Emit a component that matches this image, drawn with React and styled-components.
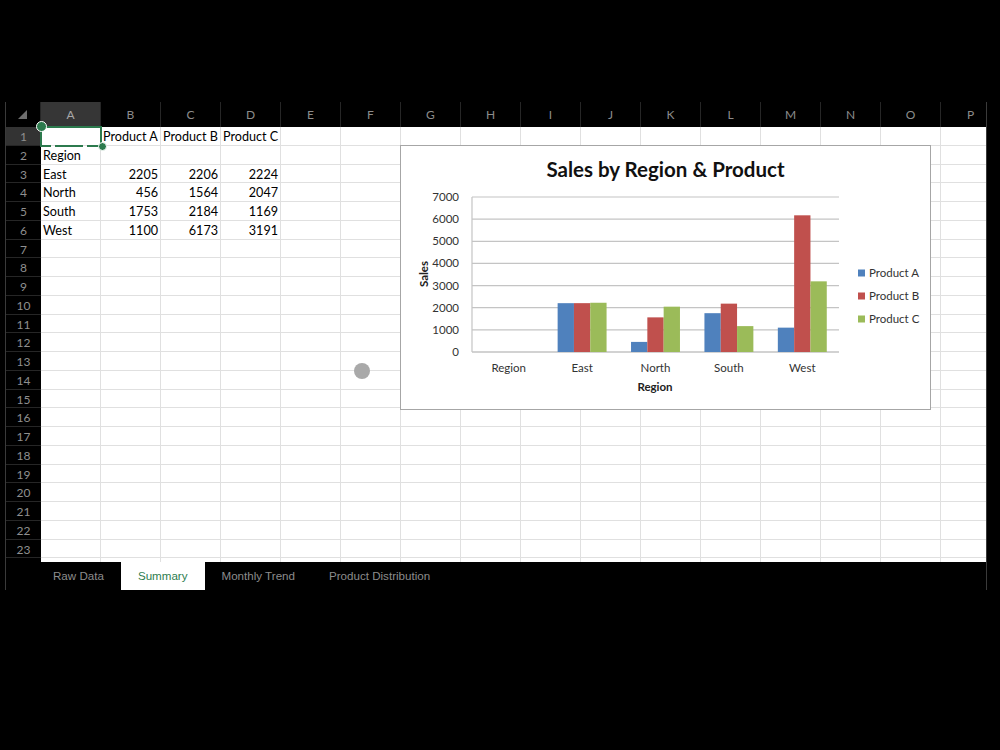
import React from "react";
import styled, { createGlobalStyle } from "styled-components";

const GlobalStyle = createGlobalStyle`
    body {
        margin: 0;
        background: #000;
        font-family: Lato, "Liberation Sans", sans-serif;
    }
`;

const COLS = "ABCDEFGHIJKLMNOP".split("");
const ROW_H = 18.75;
const GREEN = "#2c7a4d";

const cells = {
    "B1": "Product A", "C1": "Product B", "D1": "Product C",
    "A2": "Region",
    "A3": "East", "B3": 2205, "C3": 2206, "D3": 2224,
    "A4": "North", "B4": 456, "C4": 1564, "D4": 2047,
    "A5": "South", "B5": 1753, "C5": 2184, "D5": 1169,
    "A6": "West", "B6": 1100, "C6": 6173, "D6": 3191,
};

const regions = [
    { name: "Region", values: [0, 0, 0] },
    { name: "East", values: [2205, 2206, 2224] },
    { name: "North", values: [456, 1564, 2047] },
    { name: "South", values: [1753, 2184, 1169] },
    { name: "West", values: [1100, 6173, 3191] },
];

const series = [
    { name: "Product A", color: "#4f81bd" },
    { name: "Product B", color: "#c0504d" },
    { name: "Product C", color: "#9bbb59" },
];

const Page = styled.div`
    padding: 102px 0 0 5px;
`;

const Sheet = styled.div`
    position: relative;
    width: 980px;
    border-left: 1px solid #3a3a3a;
    border-right: 1px solid #3a3a3a;
`;

const Grid = styled.div`
    height: 460px;
    overflow: hidden;
`;

const HeaderRow = styled.div`
    display: flex;
    height: 25px;
    background: #000;
`;

const Corner = styled.div`
    width: 35px;
    flex: none;
    position: relative;
    border-right: 1px solid #262626;
    box-sizing: border-box;

    &::after {
        content: "";
        position: absolute;
        left: 12px;
        top: 8px;
        border-style: solid;
        border-width: 0 0 9px 9px;
        border-color: transparent transparent #6e6e6e transparent;
    }
`;

const ColHeader = styled.div`
    width: 60px;
    flex: none;
    box-sizing: border-box;
    border-right: 1px solid #262626;
    background: ${(p) => (p.$active ? "#363636" : "#000")};
    color: ${(p) => (p.$active ? "#a8a8a8" : "#8c8c8c")};
    font-size: 12px;
    line-height: 25px;
    text-align: center;
`;

const Body = styled.div`
    height: 435px;
    overflow: hidden;
`;

const Row = styled.div`
    display: flex;
    height: ${ROW_H}px;
`;

const RowLabel = styled.div`
    width: 35px;
    flex: none;
    box-sizing: border-box;
    border-bottom: 1px solid #262626;
    background: ${(p) => (p.$active ? "#333" : "#000")};
    color: #8f8f8f;
    font-size: 12px;
    line-height: ${ROW_H + 2}px;
    text-align: center;
`;

const Cell = styled.div`
    width: 60px;
    flex: none;
    box-sizing: border-box;
    border-right: 1px solid #e0e0e0;
    border-bottom: 1px solid #e0e0e0;
    background: #fff;
    color: #000;
    font-size: 12.6px;
    line-height: ${ROW_H + 2}px;
    padding: 0 2px;
    white-space: nowrap;
    text-align: ${(p) => (p.$number ? "right" : "left")};
`;

const Selection = styled.div`
    position: absolute;
    left: 34px;
    top: 24px;
    width: 62px;
    height: 21px;
    box-sizing: border-box;
    border: 2px solid ${GREEN};
    border-bottom: none;

    &::after {
        content: "";
        position: absolute;
        left: -2px;
        right: -2px;
        bottom: 0;
        height: 2px;
        background: linear-gradient(
            to right,
            ${GREEN} 0 11px,
            transparent 11px 15px,
            ${GREEN} 15px 43px,
            transparent 43px 47px,
            ${GREEN} 47px 100%
        );
    }
`;

const Handle = styled.div`
    position: absolute;
    width: ${(p) => p.$size}px;
    height: ${(p) => p.$size}px;
    border-radius: 50%;
    background: ${GREEN};
    border: 1.5px solid #fff;
    box-sizing: border-box;
    left: ${(p) => p.$x - p.$size / 2}px;
    top: ${(p) => p.$y - p.$size / 2}px;
`;

const Touch = styled.div`
    position: absolute;
    left: 348px;
    top: 261px;
    width: 16px;
    height: 16px;
    border-radius: 50%;
    background: #a9a9a9;
`;

const ChartBox = styled.div`
    position: absolute;
    left: 394px;
    top: 43px;
    width: 531px;
    height: 265px;
    box-sizing: border-box;
    border: 1px solid #a6a6a6;
    background: #fff;
    display: flex;
    flex-direction: column;
`;

const ChartTitle = styled.div`
    height: 39px;
    box-sizing: border-box;
    padding-top: 11px;
    line-height: 24px;
    text-align: center;
    font-size: 20.5px;
    font-weight: 700;
    color: #111;
`;

const ChartSvg = styled.svg`
    display: block;
    font-family: Lato, "Liberation Sans", sans-serif;
    font-size: 11.5px;
`;

const TabBar = styled.div`
    display: flex;
    height: 28px;
    padding-left: 30px;
    background: #000;
`;

const Tab = styled.div`
    padding: 0 17px;
    line-height: 28px;
    font-family: "Liberation Sans", Arial, sans-serif;
    font-size: 11.6px;
    color: ${(p) => (p.$active ? "#2e7d4f" : "#8c8c8c")};
    background: ${(p) => (p.$active ? "#fff" : "transparent")};
`;

const PLOT_L = 71;
const PLOT_R = 438;
const BASE = 167;
const PER = 22.143 / 1000;
const CAT_W = (PLOT_R - PLOT_L) / regions.length;
const BAR_W = CAT_W / 4.5;

const Chart = () => (
    <ChartBox>
        <ChartTitle>Sales by Region &amp; Product</ChartTitle>
        <ChartSvg width="529" height="224">
            {[0, 1000, 2000, 3000, 4000, 5000, 6000, 7000].map((v) => {
                const y = BASE - v * PER;
                return (
                    <g key={v}>
                        <line x1={PLOT_L} x2={PLOT_R} y1={y} y2={y} stroke={v === 0 ? "#a6a6a6" : "#c4c4c4"} strokeWidth="1.2" />
                        <text x="58" y={y + 4} textAnchor="end" fill="#333">{v}</text>
                    </g>
                );
            })}
            <line x1={PLOT_L} x2={PLOT_L} y1={BASE - 7000 * PER} y2={BASE} stroke="#c4c4c4" strokeWidth="1.2" />
            {regions.map((r, i) => {
                const x0 = PLOT_L + i * CAT_W + BAR_W * 0.75;
                return (
                    <g key={r.name}>
                        {r.values.map((v, j) =>
                            v > 0 ? (
                                <rect key={j} x={x0 + j * BAR_W} y={BASE - v * PER} width={BAR_W} height={v * PER} fill={series[j].color} />
                            ) : null
                        )}
                        <text x={PLOT_L + (i + 0.5) * CAT_W} y="187" textAnchor="middle" fill="#333">{r.name}</text>
                    </g>
                );
            })}
            <text x="254" y="206" textAnchor="middle" fontWeight="700" fill="#222">Region</text>
            <text x="27" y="89" textAnchor="middle" fontWeight="700" fill="#222" transform="rotate(-90 27 89)">Sales</text>
            {series.map((s, i) => (
                <g key={s.name}>
                    <rect x="457" y={88 + i * 23 - 3.5} width="7" height="7" fill={s.color} />
                    <text x="468" y={88 + i * 23 + 4} fill="#333">{s.name}</text>
                </g>
            ))}
        </ChartSvg>
    </ChartBox>
);

const App = () => (
    <>
        <GlobalStyle />
        <Page>
            <Sheet>
                <Grid>
                    <HeaderRow>
                        <Corner />
                        {COLS.map((c) => (
                            <ColHeader key={c} $active={c === "A"}>{c}</ColHeader>
                        ))}
                    </HeaderRow>
                    <Body>
                        {Array.from({ length: 24 }, (_, i) => i + 1).map((r) => (
                            <Row key={r}>
                                <RowLabel $active={r === 1}>{r <= 23 ? r : ""}</RowLabel>
                                {COLS.map((c) => {
                                    const v = cells[c + r];
                                    return (
                                        <Cell key={c} $number={typeof v === "number"}>{v}</Cell>
                                    );
                                })}
                            </Row>
                        ))}
                    </Body>
                </Grid>
                <TabBar>
                    <Tab>Raw Data</Tab>
                    <Tab $active>Summary</Tab>
                    <Tab>Monthly Trend</Tab>
                    <Tab>Product Distribution</Tab>
                </TabBar>
                <Selection />
                <Handle $x={35} $y={24} $size={11} />
                <Handle $x={96} $y={44} $size={9} />
                <Chart />
                <Touch />
            </Sheet>
        </Page>
    </>
);

export default App;
